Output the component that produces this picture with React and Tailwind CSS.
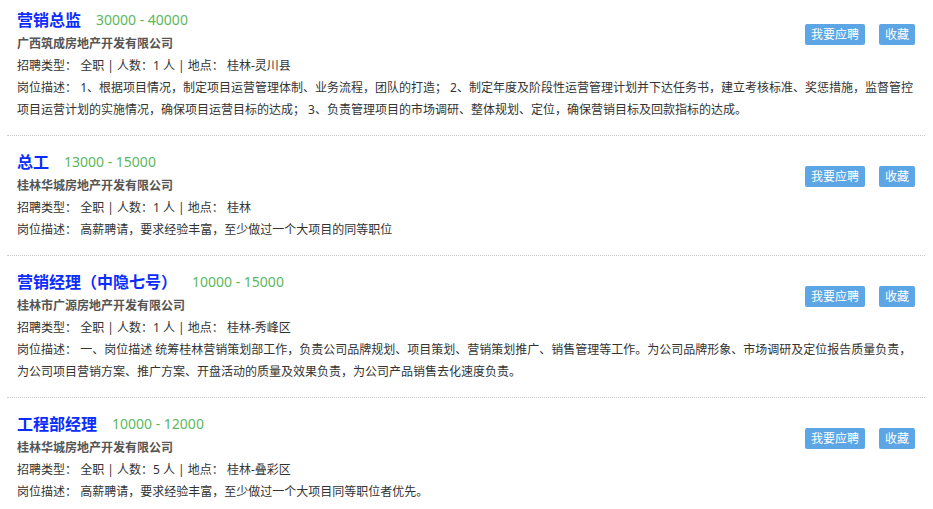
import React from 'react';

const jobs = [
    {
        title: '营销总监',
        salary: '30000 - 40000',
        company: '广西筑成房地产开发有限公司',
        type: '全职',
        count: 1,
        place: '桂林-灵川县',
        desc: '1、根据项目情况，制定项目运营管理体制、业务流程，团队的打造； 2、制定年度及阶段性运营管理计划并下达任务书，建立考核标准、奖惩措施，监督管控项目运营计划的实施情况，确保项目运营目标的达成； 3、负责管理项目的市场调研、整体规划、定位，确保营销目标及回款指标的达成。',
    },
    {
        title: '总工',
        salary: '13000 - 15000',
        company: '桂林华城房地产开发有限公司',
        type: '全职',
        count: 1,
        place: '桂林',
        desc: '高薪聘请，要求经验丰富，至少做过一个大项目的同等职位',
    },
    {
        title: '营销经理（中隐七号）',
        salary: '10000 - 15000',
        company: '桂林市广源房地产开发有限公司',
        type: '全职',
        count: 1,
        place: '桂林-秀峰区',
        desc: '一、岗位描述 统筹桂林营销策划部工作，负责公司品牌规划、项目策划、营销策划推广、销售管理等工作。为公司品牌形象、市场调研及定位报告质量负责，为公司项目营销方案、推广方案、开盘活动的质量及效果负责，为公司产品销售去化速度负责。',
    },
    {
        title: '工程部经理',
        salary: '10000 - 12000',
        company: '桂林华城房地产开发有限公司',
        type: '全职',
        count: 5,
        place: '桂林-叠彩区',
        desc: '高薪聘请，要求经验丰富，至少做过一个大项目同等职位者优先。',
    },
];

function JobItem({ job, first, last }) {
    return (
        <div className={`px-[10px] pb-[14px] ${first ? 'pt-[8px]' : 'pt-[14px]'} ${last ? '' : 'border-b border-dotted border-[#c8c8c8]'}`}>
            <div className="float-right mt-[16px] flex gap-[14px]">
                <button className="bg-[#5ca6e5] text-white text-[12px] leading-[21px] px-[6px] rounded-[2px]">我要应聘</button>
                <button className="bg-[#5ca6e5] text-white text-[12px] leading-[21px] px-[6px] rounded-[2px]">收藏</button>
            </div>
            <div className="flex items-center h-[24px] overflow-visible">
                <span className="text-[16px] leading-[24px] font-bold text-[#0a2cff]">{job.title}</span>
                <span className="ml-[15px] text-[14px] leading-[24px] text-[#5cb85c]">{job.salary}</span>
            </div>
            <div className="mt-[1px] text-[12px] leading-[22px] font-bold text-[#555]">{job.company}</div>
            <div className="text-[12px] leading-[22px] text-[#333]">
                招聘类型： {job.type} | 人数：{job.count} 人 | 地点： {job.place}
            </div>
            <div className="text-[12px] leading-[22px] text-[#333]">岗位描述： {job.desc}</div>
        </div>
    );
}

export default function App() {
    return (
        <div className="bg-white min-h-[509px] w-[933px] px-[7px] font-['Noto_Sans','Noto_Sans_CJK_SC',sans-serif]">
            <div className="w-[918px]">
                {jobs.map((job, i) => (
                    <JobItem key={i} job={job} first={i === 0} last={i === jobs.length - 1} />
                ))}
            </div>
        </div>
    );
}
